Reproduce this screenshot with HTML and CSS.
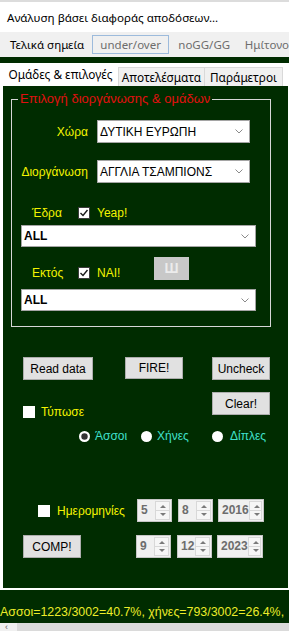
FILE: index.html
```html
<!DOCTYPE html>
<html lang="el">
<head>
    <meta charset="UTF-8">
    <meta name="viewport" content="width=device-width, initial-scale=1.0">
    <link rel="stylesheet" href="styles.css">
    <title>Ανάλυση βάσει διαφοράς αποδόσεων</title>
</head>
<body>
    <div class="title">Ανάλυση βάσει διαφοράς αποδόσεων...</div>

    <div class="topbar">
        <span class="top-item top-first">Τελικά σημεία</span>
        <span class="top-item top-active">under/over</span>
        <span class="top-item top-gg">noGG/GG</span>
        <span class="top-item top-last">Ημίτονο</span>
    </div>
    <div class="strip"></div>

    <div class="tabs">
        <div class="tab tab-selected">Ομάδες &amp; επιλογές</div>
        <div class="tab tab-results">Αποτελέσματα</div>
        <div class="tab tab-params">Παράμετροι</div>
    </div>

    <div class="panel">
        <fieldset class="group">
            <legend>Επιλογή διοργάνωσης &amp; ομάδων</legend>

            <div class="field-row first-row">
                <span class="field-label">Χώρα</span>
                <div class="combo combo-short">
                    <span>ΔΥΤΙΚΗ ΕΥΡΩΠΗ</span>
                    <svg class="chevron" width="8" height="5" viewBox="0 0 8 5"><polyline points="0.5,0.5 4,4 7.5,0.5" fill="none" stroke="#8a8a8a" stroke-width="1"/></svg>
                </div>
            </div>

            <div class="field-row second-row">
                <span class="field-label">Διοργάνωση</span>
                <div class="combo combo-short">
                    <span>ΑΓΓΛΙΑ ΤΣΑΜΠΙΟΝΣ</span>
                    <svg class="chevron" width="8" height="5" viewBox="0 0 8 5"><polyline points="0.5,0.5 4,4 7.5,0.5" fill="none" stroke="#8a8a8a" stroke-width="1"/></svg>
                </div>
            </div>

            <div class="check-row">
                <span class="check-label">Έδρα</span>
                <svg class="box" width="12" height="12" viewBox="0 0 12 12"><rect width="12" height="12" fill="#fff"/><rect x="0.5" y="0.5" width="11" height="11" fill="none" stroke="#3c3c3c"/><polyline points="2.5,6 5,8.5 9.5,3" fill="none" stroke="#1a1a1a" stroke-width="1.4"/></svg>
                <span class="check-text">Yeap!</span>
            </div>
            <div class="combo combo-wide home-combo">
                <span>ALL</span>
                <svg class="chevron" width="8" height="5" viewBox="0 0 8 5"><polyline points="0.5,0.5 4,4 7.5,0.5" fill="none" stroke="#8a8a8a" stroke-width="1"/></svg>
            </div>

            <div class="away-row">
                <span class="check-label">Εκτός</span>
                <svg class="box" width="12" height="12" viewBox="0 0 12 12"><rect width="12" height="12" fill="#fff"/><rect x="0.5" y="0.5" width="11" height="11" fill="none" stroke="#3c3c3c"/><polyline points="2.5,6 5,8.5 9.5,3" fill="none" stroke="#1a1a1a" stroke-width="1.4"/></svg>
                <span class="check-text check-wide">NAI!</span>
                <div class="mirror">Ш</div>
            </div>
            <div class="combo combo-wide away-combo">
                <span>ALL</span>
                <svg class="chevron" width="8" height="5" viewBox="0 0 8 5"><polyline points="0.5,0.5 4,4 7.5,0.5" fill="none" stroke="#8a8a8a" stroke-width="1"/></svg>
            </div>
        </fieldset>

        <div class="button-row">
            <div class="btn btn-read">Read data</div>
            <div class="btn btn-fire">FIRE!</div>
            <div class="btn btn-uncheck">Uncheck</div>
        </div>

        <div class="print-row">
            <div class="print-opt">
                <span class="box-empty"></span>
                <span class="check-text">Τύπωσε</span>
            </div>
            <div class="btn btn-clear">Clear!</div>
        </div>

        <div class="radio-row">
            <div class="radio-item item-aces">
                <svg width="11" height="11" viewBox="0 0 11 11"><circle cx="5.5" cy="5.5" r="5.5" fill="#fff"/><circle cx="5.5" cy="5.5" r="3.2" fill="#333"/></svg>
                <span>Άσσοι</span>
            </div>
            <div class="radio-item item-geese">
                <svg width="11" height="11" viewBox="0 0 11 11"><circle cx="5.5" cy="5.5" r="5.5" fill="#fff"/></svg>
                <span>Χήνες</span>
            </div>
            <div class="radio-item item-doubles">
                <svg width="11" height="11" viewBox="0 0 11 11"><circle cx="5.5" cy="5.5" r="5.5" fill="#fff"/></svg>
                <span>Δίπλες</span>
            </div>
        </div>

        <div class="date-row">
            <span class="box-empty"></span>
            <span class="check-text date-label">Ημερομηνίες</span>
            <div class="spin spin-day"><span class="spin-value">5</span><div class="spin-arrows"><span class="spin-up"></span><span class="spin-down"></span></div></div>
            <div class="spin spin-month"><span class="spin-value">8</span><div class="spin-arrows"><span class="spin-up"></span><span class="spin-down"></span></div></div>
            <div class="spin spin-year"><span class="spin-value">2016</span><div class="spin-arrows"><span class="spin-up"></span><span class="spin-down"></span></div></div>
        </div>

        <div class="comp-row">
            <div class="btn btn-comp">COMP!</div>
            <div class="spin spin-day"><span class="spin-value">9</span><div class="spin-arrows"><span class="spin-up"></span><span class="spin-down"></span></div></div>
            <div class="spin spin-month"><span class="spin-value">12</span><div class="spin-arrows"><span class="spin-up"></span><span class="spin-down"></span></div></div>
            <div class="spin spin-year"><span class="spin-value">2023</span><div class="spin-arrows"><span class="spin-up"></span><span class="spin-down"></span></div></div>
        </div>
    </div>

    <div class="status">Ασσοι=1223/3002=40.7%, χήνες=793/3002=26.4%,</div>
    <div class="hscroll"><span class="scroll-btn">‹</span></div>
</body>
</html>
```

FILE: styles.css
```css
body {
    margin: 0;
    width: 289px;
    height: 631px;
    overflow: hidden;
    background: #fff;
    font-family: "Liberation Sans", Arial, sans-serif;
    font-size: 12px;
}

.title {
    height: 30px;
    border-top: 2px solid #dcdcdc;
    padding-left: 7px;
    line-height: 31px;
    font-family: "Noto Sans", sans-serif;
    font-size: 11.6px;
    color: #000;
}

/* top menu strip */
.topbar {
    height: 25px;
    background: #f0f0f0;
    display: flex;
    align-items: center;
    font-family: "Noto Sans", sans-serif;
    font-size: 11.5px;
    color: #6d6d6d;
    white-space: nowrap;
    overflow: hidden;
}

.top-first {
    width: 82px;
    padding-left: 10px;
    box-sizing: border-box;
    color: #000;
}

.top-active {
    width: 79px;
    height: 19px;
    line-height: 17px;
    box-sizing: border-box;
    border: 1px solid #9dbbdc;
    margin-left: 10px;
    text-align: center;
}

.top-gg {
    width: 68px;
    margin-left: 9px;
}

.top-last {
    flex-shrink: 0;
}

.strip {
    height: 6px;
    background: #002c00;
}

/* tab headers */
.tabs {
    height: 23px;
    display: flex;
    align-items: flex-end;
    padding-left: 3px;
    background: #fff;
    font-family: "Noto Sans", sans-serif;
    font-size: 11.8px;
    white-space: nowrap;
}

.tab {
    height: 19px;
    box-sizing: border-box;
    border: 1px solid #d9d9d9;
    border-bottom: none;
    background: #f0f0f0;
    text-align: center;
    line-height: 18px;
}

.tab-selected {
    width: 115px;
    height: 23px;
    line-height: 21px;
    background: #fff;
    border-color: #fff;
}

.tab-results {
    width: 87px;
}

.tab-params {
    width: 78px;
    border-left: none;
}

/* main tab page */
.panel {
    margin-left: 3px;
    width: 285px;
    height: 502px;
    box-sizing: border-box;
    padding-top: 5px;
    background: #002c00;
    overflow: hidden;
}

.group {
    margin: 0 0 0 8px;
    padding: 0 0 15px 0;
    width: 260px;
    min-width: 0;
    box-sizing: border-box;
    border: 1px solid #d6d6d6;
}

.group legend {
    margin-left: 6px;
    padding: 0 2px;
    line-height: 16px;
    font-size: 13px;
    color: #e01010;
}

.field-row {
    display: flex;
    align-items: center;
    height: 23px;
}

.first-row {
    margin-top: 13px;
}

.second-row {
    margin-top: 17px;
}

.field-label {
    width: 76px;
    margin-right: 9px;
    text-align: right;
    color: #f4f400;
}

.combo {
    height: 23px;
    box-sizing: border-box;
    border: 1px solid #a5a5a5;
    background: #fff;
    display: flex;
    align-items: center;
    justify-content: space-between;
    padding: 0 6px 0 2px;
    color: #000;
}

.combo-short {
    width: 153px;
}

.combo-wide {
    width: 235px;
    height: 22px;
    margin-left: 9px;
    font-weight: bold;
}

.chevron {
    display: block;
}

.check-row {
    display: flex;
    align-items: center;
    height: 16px;
    margin-top: 22px;
}

.check-label {
    width: 66px;
    box-sizing: border-box;
    padding-left: 20px;
    color: #f4f400;
    line-height: 14px;
}

.box {
    display: block;
    margin-right: 7px;
}

.check-text {
    color: #f4f400;
    line-height: 14px;
}

.home-combo {
    margin-top: 4px;
}

.away-row {
    display: flex;
    align-items: flex-end;
    height: 23px;
    margin-top: 10px;
}

.away-row .box {
    margin-bottom: 1px;
}

.check-wide {
    width: 57px;
}

.mirror {
    width: 35px;
    height: 23px;
    background: #c8c8c8;
    color: #ececec;
    font-weight: bold;
    font-size: 14px;
    text-align: center;
    line-height: 23px;
}

.away-combo {
    margin-top: 9px;
}

/* buttons */
.btn {
    height: 23px;
    box-sizing: border-box;
    border: 1px solid #adadad;
    background: #e1e1e1;
    color: #000;
    display: flex;
    align-items: center;
    justify-content: center;
}

.button-row {
    display: flex;
    margin-top: 30px;
    padding-left: 20px;
}

.btn-read {
    width: 70px;
}

.btn-fire {
    width: 58px;
    height: 22px;
    margin-left: 32px;
}

.btn-uncheck {
    width: 58px;
    margin-left: 29px;
}

.print-row {
    display: flex;
    justify-content: space-between;
    height: 27px;
    margin-top: 12px;
    padding: 0 18px 0 20px;
}

.print-opt {
    display: flex;
    align-items: center;
    align-self: flex-end;
    gap: 6px;
}

.box-empty {
    width: 12px;
    height: 12px;
    background: #fff;
}

.btn-clear {
    width: 58px;
}

/* radios */
.radio-row {
    display: flex;
    align-items: center;
    height: 12px;
    margin-top: 11px;
    padding-left: 76px;
    color: #3fe0cc;
}

.radio-item {
    display: flex;
    align-items: center;
    gap: 5px;
}

.radio-item svg {
    display: block;
}

.item-aces {
    width: 62px;
}

.item-geese {
    width: 71px;
}

.item-doubles {
    gap: 7px;
}

/* date filters */
.date-row {
    display: flex;
    align-items: center;
    height: 23px;
    margin-top: 57px;
    padding-left: 35px;
}

.date-label {
    width: 80px;
    margin-left: 7px;
}

.comp-row {
    display: flex;
    align-items: center;
    height: 23px;
    margin-top: 13px;
    padding-left: 20px;
}

.btn-comp {
    width: 58px;
    margin-right: 55px;
}

.spin {
    display: flex;
    height: 23px;
    box-sizing: border-box;
    border: 1px solid #c6c6c6;
    background: #f0f0f0;
    color: #6d6d6d;
    font-weight: bold;
}

.spin-value {
    flex: 1;
    padding-left: 3px;
    line-height: 21px;
}

.spin-arrows {
    width: 15px;
    margin: 1px 1px 1px 0;
    display: flex;
    flex-direction: column;
}

.spin-up,
.spin-down {
    flex: 1;
    border: 1px solid #d8d8d8;
    background: #f6f6f6;
    position: relative;
}

.spin-down {
    border-top: none;
}

.spin-up::after,
.spin-down::after {
    content: "";
    position: absolute;
    left: 4px;
    width: 0;
    height: 0;
    border-left: 3px solid transparent;
    border-right: 3px solid transparent;
}

.spin-up::after {
    top: 3px;
    border-bottom: 3px solid #7a7a7a;
}

.spin-down::after {
    top: 2px;
    border-top: 3px solid #7a7a7a;
}

.spin-day {
    width: 35px;
}

.spin-month {
    width: 35px;
    margin-left: 6px;
}

.spin-year {
    width: 46px;
    margin-left: 5px;
}

/* status line */
.status {
    margin-top: 2px;
    height: 33px;
    box-sizing: border-box;
    padding-top: 15px;
    background: #002c00;
    color: #ecec2a;
    font-size: 12.4px;
    line-height: 15px;
    white-space: nowrap;
    overflow: hidden;
}

.hscroll {
    height: 8px;
    background: #dadada;
    overflow: hidden;
}

.scroll-btn {
    display: block;
    width: 17px;
    height: 8px;
    background: #f0f0f0;
    color: #606060;
    font-size: 9px;
    line-height: 8px;
    padding-left: 5px;
    box-sizing: border-box;
}
```
